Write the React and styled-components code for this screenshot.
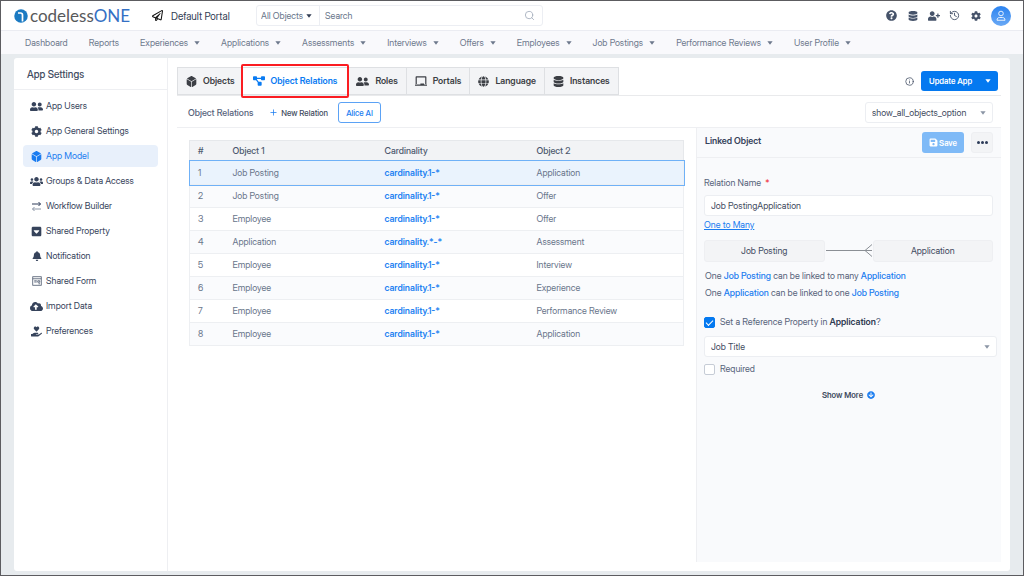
import React, { useState } from "react";
import styled, { createGlobalStyle } from "styled-components";
import {
  FaBell,
  FaChalkboard,
  FaCloudUploadAlt,
  FaCog,
  FaDatabase,
  FaDiceD6,
  FaGlobe,
  FaHandHoldingHeart,
  FaQuestionCircle,
  FaRegPaperPlane,
  FaSave,
  FaUserFriends,
  FaUserPlus,
  FaUsers,
  FaArrowCircleDown,
} from "react-icons/fa";
import { FaDiagramProject, FaSquareCaretDown } from "react-icons/fa6";
import { LuHistory, LuInfo, LuPlus, LuSearch } from "react-icons/lu";

const TransferIcon = () => (
  <svg width="11" height="11" viewBox="0 0 22 22" fill="none" strokeWidth="2">
    <path d="M2 6h17M15 2l4 4-4 4" stroke="#2c3b58" />
    <path d="M20 16H3M7 12l-4 4 4 4" stroke="#8d97a8" />
  </svg>
);

const FormIcon = () => (
  <svg width="10" height="10" viewBox="0 0 20 20" fill="none" stroke="#4a566c" strokeWidth="1.6">
    <rect x="1.5" y="1.5" width="17" height="17" />
    <path d="M1.5 5.5h17M4.5 9.5h5M4.5 12h5M11.5 9.5h4v3h-4zM13 15.5h3" />
  </svg>
);

const CaretIcon = () => (
  <svg width="6" height="4" viewBox="0 0 6 4">
    <path d="M0.4 0.3h5.2L3 3.7z" fill="currentColor" />
  </svg>
);

const UserIcon = () => (
  <svg width="10" height="12" viewBox="0 0 20 24" fill="none" stroke="#fff" strokeWidth="1.7">
    <circle cx="10" cy="7" r="4.6" />
    <path d="M2 20.5c0-4 2.5-5.5 5-5.5h6c2.5 0 5 1.5 5 5.5z" />
  </svg>
);

const LogoMark = () => (
  <svg width="14" height="14" viewBox="0 0 28 28">
    <circle cx="14" cy="14" r="13.5" fill="#1b7ac2" />
    <path d="M8 8h5q4 0 4 4v13" fill="none" stroke="#fff" strokeWidth="3.4" />
  </svg>
);

const ManyLink = () => (
  <svg width="48" height="14" viewBox="0 0 48 14" fill="none" stroke="#8b8f95">
    <path d="M1 6.5h46M47 0.5l-7 6 7 6" />
  </svg>
);

const navItems = [
  { label: "Dashboard" },
  { label: "Reports" },
  { label: "Experiences", menu: true },
  { label: "Applications", menu: true },
  { label: "Assessments", menu: true },
  { label: "Interviews", menu: true },
  { label: "Offers", menu: true },
  { label: "Employees", menu: true },
  { label: "Job Postings", menu: true },
  { label: "Performance Reviews", menu: true },
  { label: "User Profile", menu: true },
];

const sideItems = [
  { label: "App Users", icon: <FaUserFriends size={13} /> },
  { label: "App General Settings", icon: <FaCog size={11} /> },
  { label: "App Model", icon: <FaDiceD6 size={11} /> },
  { label: "Groups & Data Access", icon: <FaUsers size={13} /> },
  { label: "Workflow Builder", icon: <TransferIcon /> },
  { label: "Shared Property", icon: <FaSquareCaretDown size={11} /> },
  { label: "Notification", icon: <FaBell size={10} /> },
  { label: "Shared Form", icon: <FormIcon /> },
  { label: "Import Data", icon: <FaCloudUploadAlt size={13} /> },
  { label: "Preferences", icon: <FaHandHoldingHeart size={11} /> },
];

const tabs = [
  { label: "Objects", icon: <FaDiceD6 size={11} /> },
  { label: "Object Relations", icon: <FaDiagramProject size={12} /> },
  { label: "Roles", icon: <FaUserFriends size={13} /> },
  { label: "Portals", icon: <FaChalkboard size={12} /> },
  { label: "Language", icon: <FaGlobe size={11} /> },
  { label: "Instances", icon: <FaDatabase size={11} /> },
];

const relations = [
  ["Job Posting", "cardinality.1-*", "Application"],
  ["Job Posting", "cardinality.1-*", "Offer"],
  ["Employee", "cardinality.1-*", "Offer"],
  ["Application", "cardinality.*-*", "Assessment"],
  ["Employee", "cardinality.1-*", "Interview"],
  ["Employee", "cardinality.1-*", "Experience"],
  ["Employee", "cardinality.1-*", "Performance Review"],
  ["Employee", "cardinality.1-*", "Application"],
];

const Header = () => (
  <TopBar>
    <Logo href="#">
      <LogoMark />
      <span>
        codeless<b>ONE</b>
      </span>
    </Logo>
    <PortalLink href="#">
      <FaRegPaperPlane size={11} />
      Default Portal
    </PortalLink>
    <SearchBox>
      <ScopeSelect>
        <select aria-label="Search in">
          <option>All Objects</option>
        </select>
        <CaretIcon />
      </ScopeSelect>
      <input type="search" placeholder="Search" aria-label="Search" />
      <LuSearch size={11} />
    </SearchBox>
    <TopActions>
      <IconButton aria-label="Help">
        <FaQuestionCircle size={11} />
      </IconButton>
      <IconButton aria-label="Data">
        <FaDatabase size={10} />
      </IconButton>
      <IconButton aria-label="Invite user">
        <FaUserPlus size={12} />
      </IconButton>
      <IconButton aria-label="History">
        <LuHistory size={11} />
      </IconButton>
      <IconButton aria-label="Settings">
        <FaCog size={10} />
      </IconButton>
      <Avatar aria-label="Account">
        <UserIcon />
      </Avatar>
    </TopActions>
  </TopBar>
);

const Sidebar = () => (
  <Side>
    <SideTitle>App Settings</SideTitle>
    <SideList>
      {sideItems.map(({ label, icon }) => (
        <SideLink key={label} href="#" $active={label === "App Model"}>
          <span>{icon}</span>
          {label}
        </SideLink>
      ))}
    </SideList>
  </Side>
);

const RelationTable = () => {
  const [selected, setSelected] = useState(0);

  return (
    <Table>
      <colgroup>
        <col className="index" />
        <col className="object" />
        <col className="object" />
        <col />
      </colgroup>
      <thead>
        <tr>
          <th>#</th>
          <th>Object 1</th>
          <th>Cardinality</th>
          <th>Object 2</th>
        </tr>
      </thead>
      <tbody>
        {relations.map(([from, cardinality, to], i) => (
          <Row key={i} $selected={i === selected} onClick={() => setSelected(i)}>
            <td>{i + 1}</td>
            <td>{from}</td>
            <td>
              <strong>{cardinality}</strong>
            </td>
            <td>{to}</td>
          </Row>
        ))}
      </tbody>
    </Table>
  );
};

const LinkedObject = () => {
  const [name, setName] = useState("Job PostingApplication");
  const [reference, setReference] = useState(true);
  const [required, setRequired] = useState(false);

  return (
    <Details>
      <DetailsHead>
        <h2>Linked Object</h2>
        <SaveButton type="button">
          <FaSave size={9} />
          Save
        </SaveButton>
        <MoreButton type="button" aria-label="More">
          <i />
          <i />
          <i />
        </MoreButton>
      </DetailsHead>
      <DetailsBody>
        <FieldLabel htmlFor="relation-name">
          Relation Name <em>*</em>
        </FieldLabel>
        <TextInput id="relation-name" value={name} onChange={(e) => setName(e.target.value)} />
        <TypeLink href="#">One to Many</TypeLink>
        <Diagram>
          <ObjectBox>Job Posting</ObjectBox>
          <ManyLink />
          <ObjectBox>Application</ObjectBox>
        </Diagram>
        <Sentence>
          One <b>Job Posting</b> can be linked to many <b>Application</b>
        </Sentence>
        <Sentence>
          One <b>Application</b> can be linked to one <b>Job Posting</b>
        </Sentence>
        <CheckLabel $first>
          <input type="checkbox" checked={reference} onChange={(e) => setReference(e.target.checked)} />
          <span>
            Set a Reference Property in <strong>Application</strong>?
          </span>
        </CheckLabel>
        <SelectBox $wide>
          <select aria-label="Reference property">
            <option>Job Title</option>
          </select>
          <CaretIcon />
        </SelectBox>
        <CheckLabel>
          <input type="checkbox" checked={required} onChange={(e) => setRequired(e.target.checked)} />
          <span>Required</span>
        </CheckLabel>
        <ShowMore type="button">
          Show More <FaArrowCircleDown size={8} />
        </ShowMore>
      </DetailsBody>
    </Details>
  );
};

export default function App() {
  return (
    <Page>
      <GlobalStyle />
      <Header />
      <Nav>
        {navItems.map(({ label, menu }) => (
          <NavButton key={label} type="button">
            {label}
            {menu && <CaretIcon />}
          </NavButton>
        ))}
      </Nav>
      <Panel>
        <Sidebar />
        <Main>
          <TabBar>
            {tabs.map(({ label, icon }) => (
              <Tab key={label} type="button" $active={label === "Object Relations"}>
                {icon}
                {label}
              </Tab>
            ))}
            <Update>
              <LuInfo size={9} />
              <UpdateButton type="button">
                Update App
                <CaretIcon />
              </UpdateButton>
            </Update>
          </TabBar>
          <Toolbar>
            <h1>Object Relations</h1>
            <NewButton type="button">
              <LuPlus size={9} />
              New Relation
            </NewButton>
            <AliceButton type="button">Alice AI</AliceButton>
            <SelectBox>
              <select aria-label="Filter objects">
                <option>show_all_objects_option</option>
              </select>
              <CaretIcon />
            </SelectBox>
          </Toolbar>
          <Content>
            <TablePane>
              <RelationTable />
            </TablePane>
            <LinkedObject />
          </Content>
        </Main>
      </Panel>
    </Page>
  );
}

const GlobalStyle = createGlobalStyle`
  * {
    box-sizing: border-box;
  }

  body {
    margin: 0;
    font-family: "Inter Display", Inter, "Liberation Sans", sans-serif;
    font-size: 9px;
    line-height: 12px;
    color: #3f4b60;
  }

  button,
  input,
  select {
    margin: 0;
    padding: 0;
    border: 0;
    background: none;
    font: inherit;
    color: inherit;
    outline: none;
  }

  a {
    color: inherit;
    text-decoration: none;
  }

  h1,
  h2,
  p {
    margin: 0;
  }

  svg {
    flex: none;
  }
`;

const Page = styled.div`
  display: flex;
  flex-direction: column;
  min-height: 100vh;
  border: 1px solid #5c5c60;
  background: #e7ebee;
`;

const TopBar = styled.header`
  display: flex;
  align-items: center;
  height: 29px;
  padding: 0 12px 0 13px;
  background: #fff;
`;

const Logo = styled.a`
  display: flex;
  align-items: center;
  gap: 2px;
  width: 138px;
  font-family: Lato, sans-serif;
  font-size: 17px;
  line-height: 20px;
  color: #58595b;

  b {
    font-weight: 400;
    color: #3470c4;
  }
`;

const PortalLink = styled.a`
  display: flex;
  align-items: center;
  gap: 8px;
  width: 104px;
  font-size: 10px;
  color: #2f3b52;

  svg {
    color: #111;
  }
`;

const SearchBox = styled.div`
  display: flex;
  align-items: center;
  width: 287px;
  height: 21px;
  padding-right: 7px;
  border: 1px solid #eceef3;
  border-radius: 3px;
  color: #68758a;

  input {
    flex: 1;
    min-width: 0;
    padding-left: 5px;
  }

  input::placeholder {
    color: #68758a;
  }

  > svg {
    color: #a9b1bf;
  }
`;

const ScopeSelect = styled.div`
  display: flex;
  align-items: center;
  height: 100%;
  padding: 0 7px 0 4px;
  border-right: 1px solid #eceef3;

  select {
    appearance: none;
    width: 45px;
  }

  svg {
    color: #2f3b52;
  }
`;

const TopActions = styled.div`
  display: flex;
  align-items: center;
  gap: 10px;
  margin-left: auto;
`;

const IconButton = styled.button`
  display: flex;
  justify-content: center;
  width: 11px;
  color: #46536a;
`;

const Avatar = styled.button`
  display: grid;
  place-items: center;
  width: 20px;
  height: 20px;
  border-radius: 50%;
  background: linear-gradient(#2b83f0, #6aa9f5);
`;

const Nav = styled.nav`
  display: flex;
  gap: 21px;
  height: 24px;
  padding-left: 24px;
  border-top: 1px solid #ebecf2;
  background: #f9f9fc;
`;

const NavButton = styled.button`
  display: flex;
  align-items: center;
  gap: 6px;
  color: #6d788c;
  white-space: nowrap;
`;

const Panel = styled.div`
  display: flex;
  flex: 1;
  margin: 4px 13px 4px;
  border-radius: 3px;
  background: #fff;
`;

const Side = styled.aside`
  flex: none;
  width: 154px;
  border-right: 1px solid #eeeff2;
`;

const SideTitle = styled.div`
  height: 32px;
  padding: 0 13px;
  border-bottom: 1px solid #eeeff2;
  font-size: 10px;
  font-weight: 500;
  line-height: 32px;
`;

const SideList = styled.nav`
  display: flex;
  flex-direction: column;
  gap: 3px;
  padding: 5px 9px;
`;

const SideLink = styled.a`
  display: flex;
  align-items: center;
  gap: 3px;
  height: 22px;
  padding-left: 7px;
  border-radius: 4px;
  background: ${({ $active }) => ($active ? "#e8f0fb" : "transparent")};
  color: ${({ $active }) => ($active ? "#1a7cf0" : "#36435b")};

  span {
    display: flex;
    justify-content: center;
    width: 13px;
  }
`;

const Main = styled.main`
  display: flex;
  flex: 1;
  flex-direction: column;
  min-width: 0;
  padding: 9px 9px;
`;

const TabBar = styled.div`
  display: flex;
  height: 29px;
  border-bottom: 1px solid #e9eaec;
`;

const Tab = styled.button`
  position: relative;
  display: flex;
  align-items: center;
  gap: 6px;
  padding: ${({ $active }) => ($active ? "0 10px" : "0 8px")};
  border: 1px solid #dee0e3;
  border-left-width: ${({ $active }) => ($active ? "0" : "1px")};
  border-right-width: 0;
  background: ${({ $active }) => ($active ? "#fff" : "#f3f4f6")};
  font-weight: 600;
  color: ${({ $active }) => ($active ? "#0a7bf2" : "#3c3f45")};
  white-space: nowrap;

  &:nth-last-child(2) {
    border-right-width: 1px;
  }

  /* highlight frame drawn over the neighbouring tabs */
  &::after {
    content: "";
    display: ${({ $active }) => ($active ? "block" : "none")};
    position: absolute;
    z-index: 1;
    inset: -4px -2px;
    border: 2px solid #fb1d22;
    border-radius: 2px;
  }
`;

const Update = styled.div`
  display: flex;
  align-items: center;
  gap: 7px;
  margin-left: auto;
  padding-right: 3px;
`;

const UpdateButton = styled.button`
  display: flex;
  align-items: center;
  justify-content: space-between;
  width: 77px;
  height: 20px;
  padding: 0 7px 0 8px;
  border-radius: 3px;
  background: #0479f0;
  font-size: 8px;
  font-weight: 600;
  color: #fff;
`;

const Toolbar = styled.div`
  display: flex;
  align-items: center;
  height: 32px;
  padding: 2px 8px 0 11px;
  border-bottom: 1px solid #eeeff2;

  h1 {
    font-size: 9px;
    font-weight: 500;
    color: #56627a;
  }
`;

const NewButton = styled.button`
  display: flex;
  align-items: center;
  gap: 3px;
  margin: 0 10px 0 16px;
  font-size: 8px;
  font-weight: 500;

  svg {
    color: #1a7cf0;
  }
`;

const AliceButton = styled.button`
  width: 43px;
  height: 21px;
  border: 1px solid #5ba2f5;
  border-radius: 3px;
  font-size: 8px;
  font-weight: 500;
  color: #1a7cf0;
`;

const SelectBox = styled.div`
  display: flex;
  align-items: center;
  width: ${({ $wide }) => ($wide ? "auto" : "128px")};
  height: 21px;
  margin-left: ${({ $wide }) => ($wide ? "0" : "auto")};
  margin-right: ${({ $wide }) => ($wide ? "-4px" : "0")};
  padding: 0 6px;
  border: 1px solid #eceef2;
  border-radius: 3px;
  background: #fff;

  select {
    appearance: none;
    flex: 1;
    min-width: 0;
  }

  svg {
    color: #8b95a5;
  }
`;

const Content = styled.div`
  display: flex;
  flex: 1;
`;

const TablePane = styled.section`
  flex: 1;
  min-width: 0;
  padding: 12px;
`;

const Table = styled.table`
  width: 100%;
  table-layout: fixed;
  border-collapse: collapse;
  border: 1px solid #e6e8eb;
  color: #68748a;

  .index {
    width: 35px;
  }

  .object {
    width: 152px;
  }

  th,
  td {
    padding: 0 8px;
    text-align: left;
    white-space: nowrap;
  }

  th {
    height: 20px;
    background: #f2f3f5;
    font-weight: 500;
    color: #4d596e;
  }

  strong {
    font-weight: 600;
    color: #2583f2;
  }
`;

const Row = styled.tr`
  height: 23px;
  border: 1px solid #edeff2;
  outline: ${({ $selected }) => ($selected ? "1px solid #6fb1f7" : "none")};
  background: ${({ $selected }) => ($selected ? "#eaf3fd" : "#fff")};

  &:nth-child(even) {
    background: ${({ $selected }) => ($selected ? "#eaf3fd" : "#fafbfd")};
  }

  &:first-child {
    height: 24px;
  }
`;

const Details = styled.section`
  flex: none;
  width: 305px;
  border-left: 1px solid #eeeff2;
  background: #f9fafc;
`;

const DetailsHead = styled.div`
  display: flex;
  align-items: center;
  gap: 7px;
  height: 30px;
  padding: 0 8px;
  border-bottom: 1px solid #eeeff2;

  h2 {
    flex: 1;
    padding-bottom: 3px;
    font-size: 9px;
    font-weight: 600;
    color: #36435b;
  }
`;

const SaveButton = styled.button`
  display: flex;
  align-items: center;
  justify-content: center;
  gap: 1px;
  width: 42px;
  height: 21px;
  border-radius: 3px;
  background: #7fbaf7;
  font-size: 8px;
  font-weight: 600;
  color: #fff;
`;

const MoreButton = styled.button`
  display: flex;
  align-items: center;
  justify-content: center;
  gap: 1px;
  width: 22px;
  height: 21px;
  border: 1px solid #eeeff2;
  border-radius: 3px;
  background: #f3f4f6;

  i {
    width: 3px;
    height: 3px;
    border-radius: 50%;
    background: #2c3b58;
  }
`;

const DetailsBody = styled.div`
  display: flex;
  flex-direction: column;
  padding: 19px 8px 0 7px;
`;

const FieldLabel = styled.label`
  margin-bottom: 6px;
  color: #56627a;

  em {
    margin-left: 2px;
    font-style: normal;
    color: #f0323c;
  }
`;

const TextInput = styled.input`
  height: 21px;
  padding: 0 6px;
  border: 1px solid #eceef2;
  border-radius: 3px;
  background: #fff;
`;

const TypeLink = styled.a`
  align-self: flex-start;
  margin: 3px 0 9px;
  font-weight: 400;
  color: #1a7cf0;
  text-decoration: underline;
`;

const Diagram = styled.div`
  display: flex;
  align-items: center;
  margin-bottom: 5px;
`;

const ObjectBox = styled.div`
  flex: 1;
  height: 22px;
  border: 1px solid #eeeff2;
  border-radius: 3px;
  background: #f3f4f6;
  line-height: 20px;
  text-align: center;
`;

const Sentence = styled.p`
  padding-left: 1px;
  line-height: 17px;
  color: #56627a;

  b {
    font-weight: 500;
    color: #1a7cf0;
  }
`;

const CheckLabel = styled.label`
  display: flex;
  align-items: center;
  gap: 5px;
  align-self: flex-start;
  margin: ${({ $first }) => ($first ? "15px 0 8px" : "6px 0 0")};
  color: #56627a;

  input {
    appearance: none;
    width: 11px;
    height: 11px;
    border: 1px solid #c6ccd6;
    border-radius: 2px;
    background: #fff;
  }

  input:checked {
    display: grid;
    place-items: center;
    border-color: #0479f0;
    background: #0479f0;
  }

  input:checked::after {
    content: "";
    width: 6px;
    height: 3px;
    border: solid #fff;
    border-width: 0 0 1px 1px;
    transform: rotate(-45deg);
  }

  strong {
    font-weight: 600;
    color: #2f3b52;
  }
`;

const ShowMore = styled.button`
  display: flex;
  align-items: center;
  align-self: center;
  gap: 4px;
  margin-top: 14px;
  font-size: 8px;
  font-weight: 600;

  svg {
    color: #1a7cf0;
  }
`;
